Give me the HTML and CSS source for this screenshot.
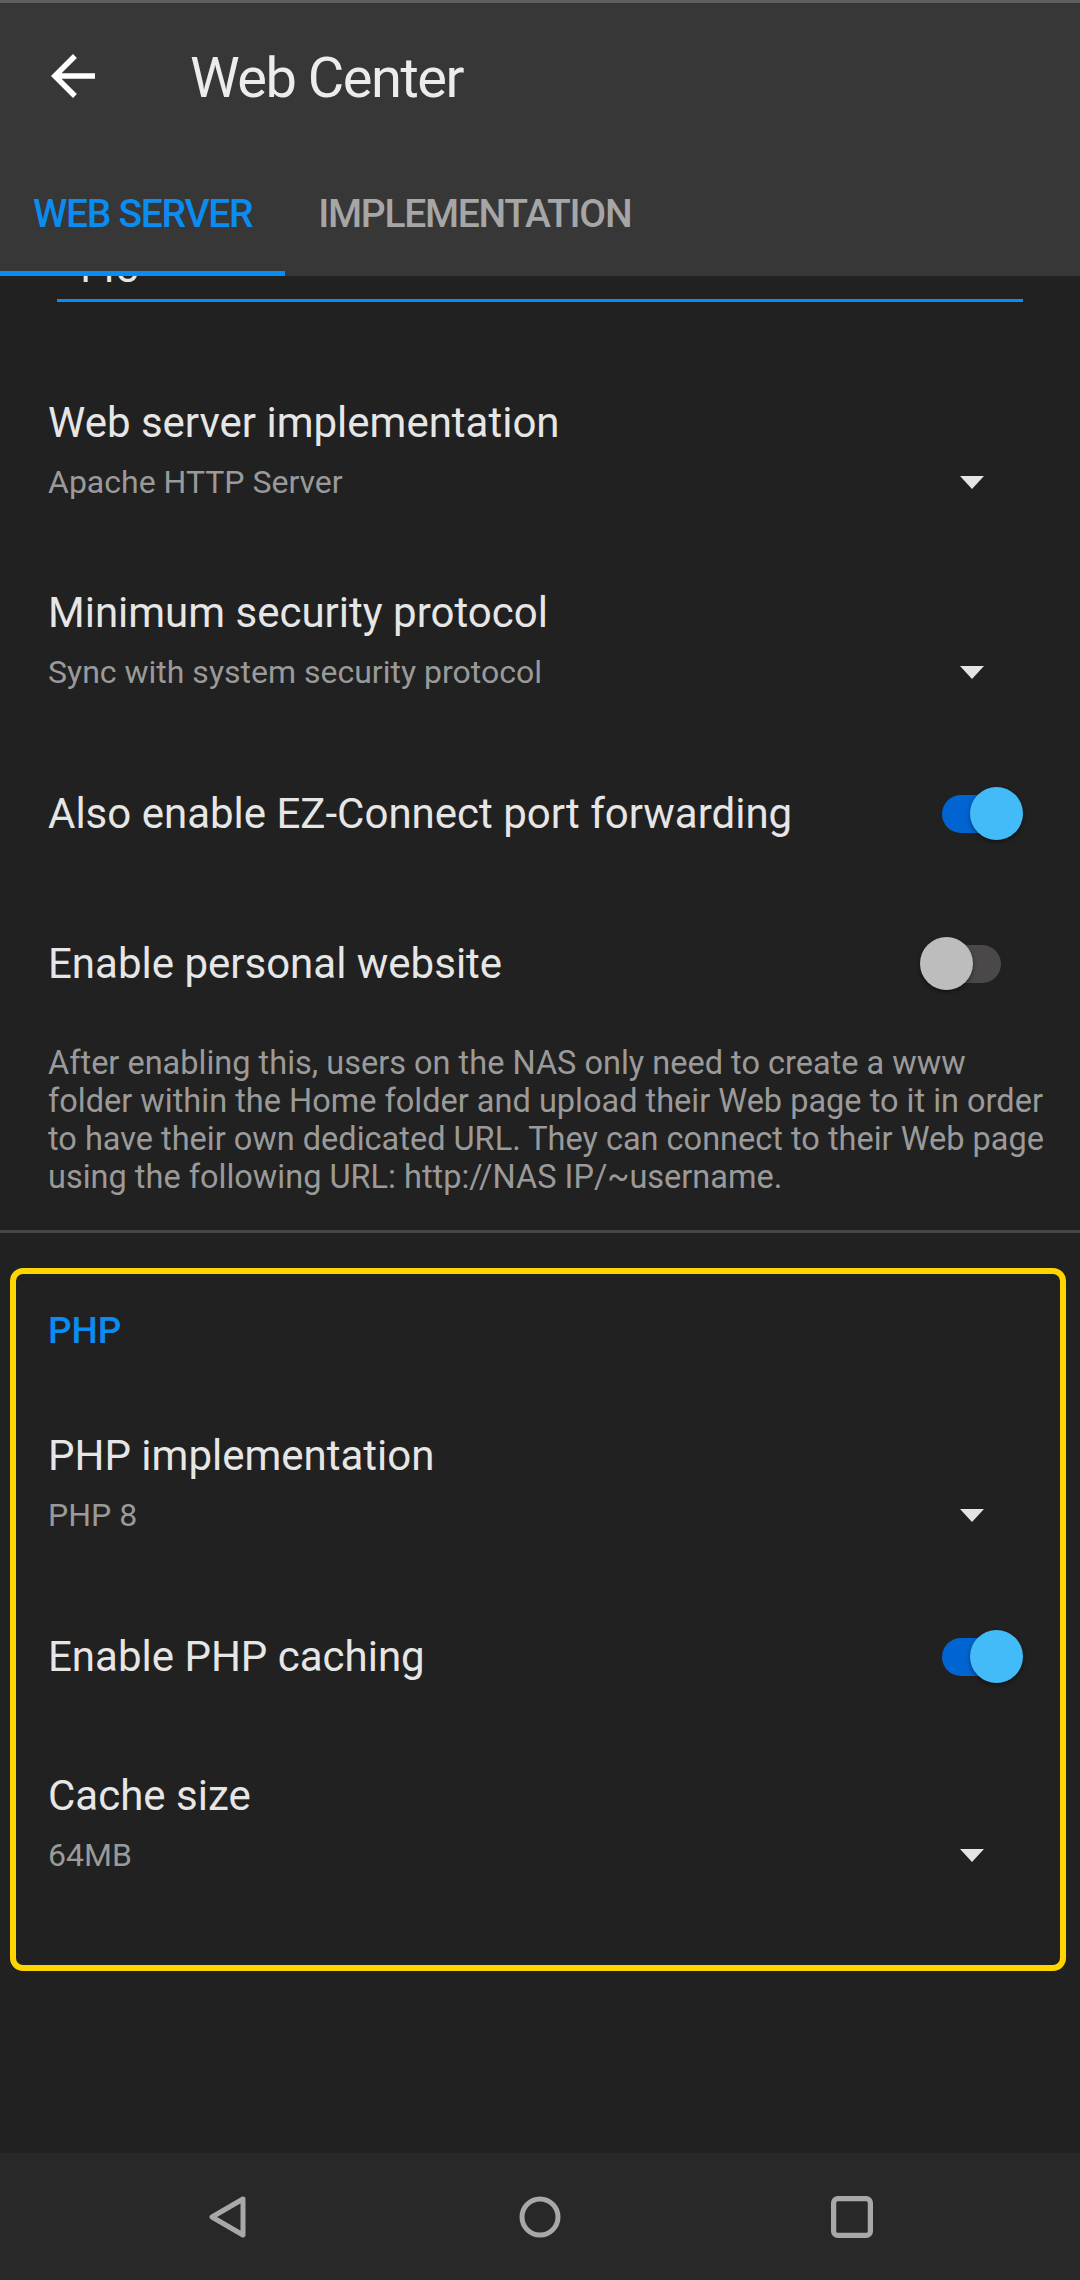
FILE: index.html
```html
<!DOCTYPE html>
<html lang="en">
<head>
    <meta charset="UTF-8">
    <meta name="viewport" content="width=device-width, initial-scale=1.0">
    <title>Web Center</title>
    <link rel="stylesheet" href="styles.css">
</head>
<body>
    <div class="screen">
        <header class="appbar">
            <div class="toolbar">
                <svg class="back-icon" viewBox="0 0 24 24"><path d="M20 11H7.83l5.59-5.59L12 4l-8 8 8 8 1.41-1.41L7.83 13H20v-2z"/></svg>
                <h1>Web Center</h1>
            </div>
            <nav class="tabs">
                <div class="tab active">WEB SERVER</div>
                <div class="tab">IMPLEMENTATION</div>
            </nav>
        </header>

        <main class="content">
            <!-- campo da porta, quase todo escondido atras da barra -->
            <div class="port-field"><span>443</span></div>

            <div class="pref-list">
                <div class="pref">
                    <div class="pref-title">Web server implementation</div>
                    <div class="pref-value">Apache HTTP Server <span class="caret"></span></div>
                </div>
                <div class="pref">
                    <div class="pref-title">Minimum security protocol</div>
                    <div class="pref-value">Sync with system security protocol <span class="caret"></span></div>
                </div>
                <div class="pref switch">
                    <div class="pref-title">Also enable EZ-Connect port forwarding</div>
                    <div class="toggle on"></div>
                </div>
                <div class="pref switch">
                    <div class="pref-title">Enable personal website</div>
                    <div class="toggle"></div>
                </div>
                <p class="pref-note">After enabling this, users on the NAS only need to create a www folder within the Home folder and upload their Web page to it in order to have their own dedicated URL. They can connect to their Web page using the following URL: http://NAS IP/~username.</p>
            </div>

            <div class="divider"></div>

            <section class="highlight">
                <div class="pref-list">
                    <div class="pref-category">PHP</div>
                    <div class="pref">
                        <div class="pref-title">PHP implementation</div>
                        <div class="pref-value">PHP 8 <span class="caret"></span></div>
                    </div>
                    <div class="pref switch">
                        <div class="pref-title">Enable PHP caching</div>
                        <div class="toggle on"></div>
                    </div>
                    <div class="pref">
                        <div class="pref-title">Cache size</div>
                        <div class="pref-value">64MB <span class="caret"></span></div>
                    </div>
                </div>
            </section>
        </main>

        <footer class="navbar">
            <svg class="nav-icon" viewBox="0 0 40 42"><path d="M35 3 L4 21 L35 39 Z"/></svg>
            <svg class="nav-icon" viewBox="0 0 42 42"><circle cx="21" cy="21" r="18"/></svg>
            <svg class="nav-icon" viewBox="0 0 40 40"><rect x="2.5" y="2.5" width="35" height="35" rx="4"/></svg>
        </footer>
    </div>
</body>
</html>
```

FILE: styles.css
```css
body {
    margin: 0;
    background-color: #212121;
    font-family: Roboto, "Liberation Sans", sans-serif;
    color: #e6e6e6;
}
.screen {
    width: 1080px;
    height: 2280px;
    display: flex;
    flex-direction: column;
    overflow: hidden;
}
.appbar {
    background-color: #373737;
    border-top: 3px solid #5e5e5e;
    position: relative;
    z-index: 2;
}
.toolbar {
    height: 150px;
    display: flex;
    align-items: center;
    padding-left: 40px;
}
.back-icon {
    width: 66px;
    height: 66px;
    fill: #ffffff;
    margin-top: -4px;
}
.toolbar h1 {
    margin: 0 0 0 84px;
    font-size: 56px;
    line-height: 66px;
    font-weight: 400;
    letter-spacing: -1.5px;
    color: #ececec;
}
.tabs {
    height: 123px;
    display: flex;
}
.tab {
    box-sizing: border-box;
    height: 100%;
    padding: 4px 33px 0;
    display: flex;
    align-items: center;
    font-size: 39px;
    line-height: 46px;
    font-weight: 500;
    letter-spacing: -1.3px;
    color: #a6a6a6;
    border-bottom: 5px solid transparent;
}
.tab.active {
    color: #0a8cf0;
    border-bottom-color: #0a8cf0;
}
.content {
    flex: 1;
}
.port-field {
    height: 23px;
    margin: 0 57px;
    padding-left: 12px;
    border-bottom: 3px solid #0a8cf0;
    overflow: hidden;
}
.port-field span {
    display: block;
    margin-top: -29px;
    font-size: 42px;
    line-height: 42px;
    color: #e6e6e6;
}
.pref-list {
    margin-top: 53px;
}
.pref {
    padding: 43px 57px 43px 48px;
}
.pref-title {
    font-size: 42px;
    line-height: 50px;
    color: #e6e6e6;
}
.pref-value {
    margin-top: 14px;
    display: flex;
    justify-content: space-between;
    align-items: center;
    font-size: 32px;
    line-height: 40px;
    color: #9a9a9a;
}
.caret {
    width: 0;
    height: 0;
    margin-right: 39px;
    border-left: 12.5px solid transparent;
    border-right: 12.5px solid transparent;
    border-top: 13px solid #e4e4e4;
}
.pref.switch {
    display: flex;
    justify-content: space-between;
    align-items: center;
    padding: 52px 57px 45px 48px;
}
.toggle {
    position: relative;
    width: 103px;
    height: 53px;
    flex-shrink: 0;
}
.toggle::before {
    content: "";
    position: absolute;
    left: 22px;
    right: 22px;
    top: 7.5px;
    height: 38px;
    border-radius: 19px;
    background-color: #4a4848;
}
.toggle::after {
    content: "";
    position: absolute;
    top: 0;
    left: 0;
    width: 53px;
    height: 53px;
    border-radius: 50%;
    background-color: #bdbdbd;
    box-shadow: 0 2px 4px rgba(0, 0, 0, 0.45);
}
.toggle.on::before {
    background-color: #0064d2;
}
.toggle.on::after {
    left: auto;
    right: 0;
    background-color: #42bbf8;
}
.pref-note {
    margin: 9px 34px 34px 48px;
    font-size: 32.5px;
    line-height: 38px;
    color: #9a9a9a;
}
.divider {
    height: 3px;
    background-color: #464646;
}
.highlight {
    margin: 35px 14px 0 10px;
    border: 6px solid #ffd500;
    border-radius: 13px;
    padding-bottom: 47px;
}
.highlight .pref-list {
    margin: 0 -20px 0 -16px;
}
.pref-category {
    padding: 35px 48px;
    font-size: 37px;
    line-height: 44px;
    font-weight: 500;
    color: #0a8cf0;
}
.navbar {
    height: 127px;
    background-color: #282828;
    display: flex;
    justify-content: center;
    align-items: center;
    gap: 270px;
}
.nav-icon {
    width: 42px;
    height: 42px;
    fill: none;
    stroke: #a8a8a8;
    stroke-width: 5;
    stroke-linejoin: round;
}
```
